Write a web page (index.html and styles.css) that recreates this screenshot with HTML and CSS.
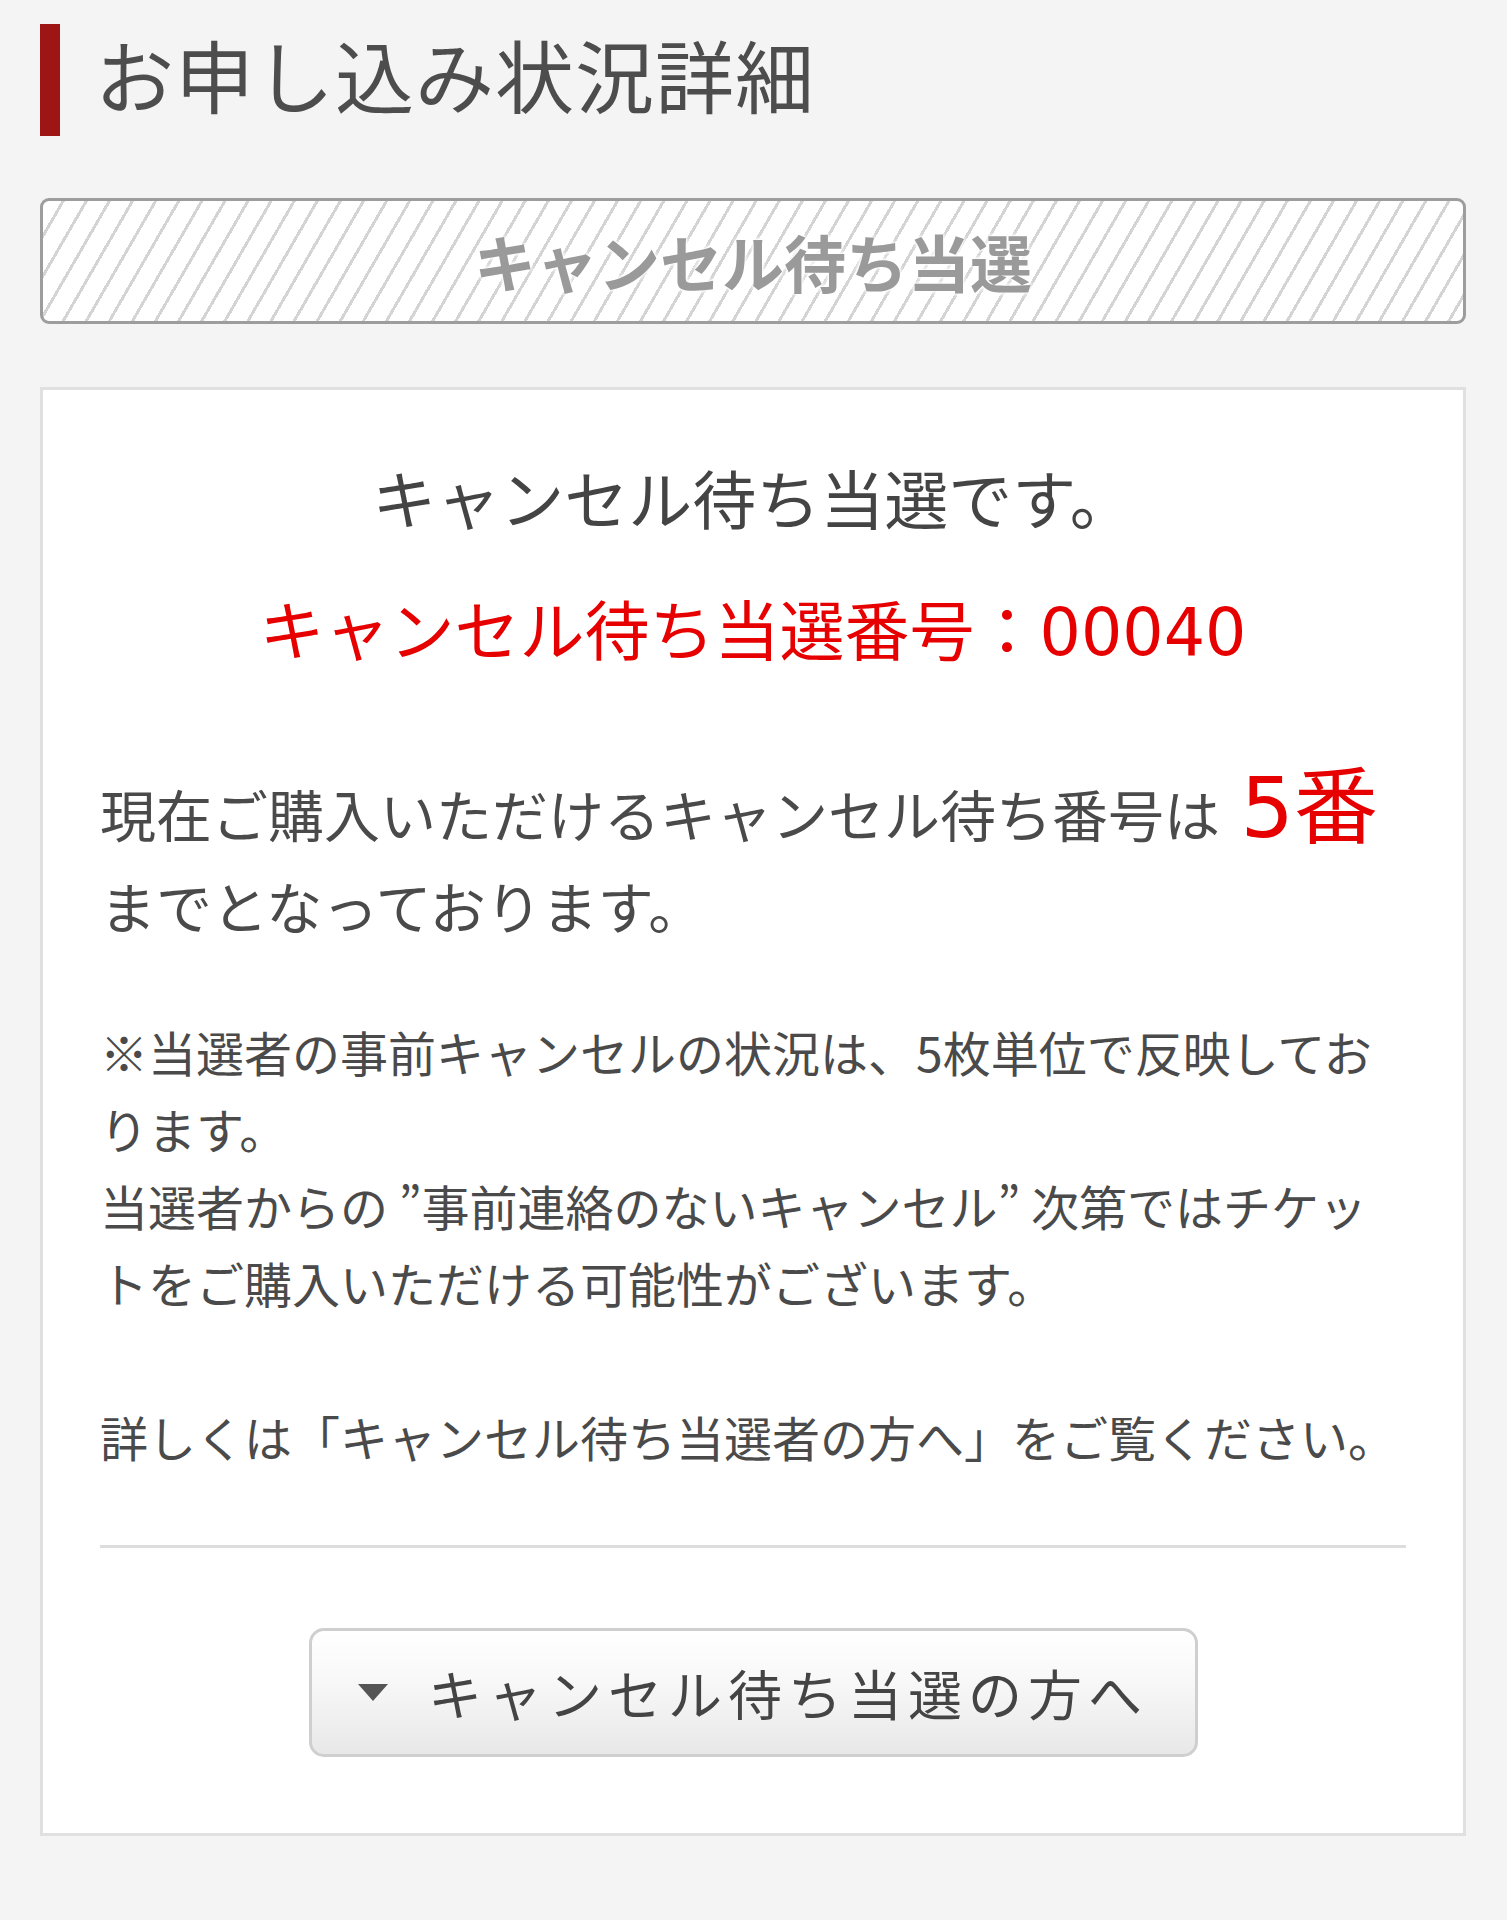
FILE: index.html
```html
<!DOCTYPE html>
<html lang="ja">
<head>
<meta charset="utf-8">
<title>お申し込み状況詳細</title>
<link rel="stylesheet" href="styles.css">
</head>
<body>
<div class="page">
  <h1 class="heading"><span class="heading-bar"></span><span class="heading-text">お申し込み状況詳細</span></h1>

  <div class="status-box"><span class="status-text">キャンセル待ち当選</span></div>

  <section class="card">
    <p class="card-title">キャンセル待ち当選です。</p>
    <p class="card-number">キャンセル待ち当選番号：<span class="digits">00040</span></p>
    <p class="lead">現在ご購入いただけるキャンセル待ち番号は <span class="lead-num"><span class="digits">5</span>番</span><br>までとなっております。</p>
    <p class="notes">※当選者の事前キャンセルの状況は、5枚単位で反映しております。<br>当選者からの ”事前連絡のないキャンセル” 次第ではチケットをご購入いただける可能性がございます。<br><br>詳しくは「キャンセル待ち当選者の方へ」をご覧ください。</p>
    <hr class="divider">
    <div class="btn-wrap">
      <button class="toggle-btn" type="button"><span class="tri"></span><span class="btn-label">キャンセル待ち当選の方へ</span></button>
    </div>
  </section>
</div>
</body>
</html>
```

FILE: styles.css
```css
html, body {
  margin: 0;
  padding: 0;
  background: #f4f4f4;
}
body {
  font-family: "Noto Sans CJK JP", "Noto Sans", sans-serif;
  color: #4a4a4a;
}
.page {
  padding: 24px 41px 0 40px;
}
.heading {
  display: flex;
  align-items: center;
  margin: 0;
  height: 112px;
  font-weight: 400;
}
.heading-bar {
  width: 20px;
  height: 112px;
  background: #9e1515;
  flex: none;
}
.heading-text {
  margin-left: 35px;
  margin-bottom: 12px;
  font-size: 79px;
  line-height: 100px;
  color: #4d4d4d;
  letter-spacing: 1px;
}
.status-box {
  margin-top: 62px;
  height: 120px;
  border: 3px solid #9d9d9d;
  border-radius: 9px;
  background: repeating-linear-gradient(120deg, #ffffff 0px, #ffffff 16px, #d4d4d4 16px, #d4d4d4 19px, #ffffff 19px, #ffffff 20px);
  display: flex;
  align-items: center;
  justify-content: center;
}
.status-text {
  font-size: 62px;
  line-height: 120px;
  font-weight: 700;
  color: #9a9a9a;
  text-shadow: 0 0 3px #fff, 0 0 3px #fff, 0 0 4px #fff, 0 0 6px #fff;
}
.card {
  margin-top: 63px;
  border: 3px solid #e0e0e0;
  background: #fff;
  padding: 46px 57px 76px 57px;
}
.card p {
  margin: 0;
}
.card-title {
  text-align: center;
  font-size: 64px;
  line-height: 120px;
  color: #444;
}
.card-number {
  margin-top: 21px !important;
  text-align: center;
  font-size: 65px;
  line-height: 100px;
  color: #e60000;
}
.digits {
  font-family: "DejaVu Sans", "Noto Sans", sans-serif;
}
.lead {
  margin-top: 76px !important;
  font-size: 56px;
  line-height: 92px;
  color: #4a4a4a;
}
.lead-num {
  font-size: 84px;
  line-height: 1;
  font-weight: 400;
  margin-left: 8px;
  color: #e60000;
}
.notes {
  margin-top: 62px !important;
  font-size: 48px;
  line-height: 77px;
  color: #4a4a4a;
}
.divider {
  margin: 70px 0 0 0;
  border: none;
  height: 3px;
  background: #dddddd;
}
.btn-wrap {
  margin-top: 80px;
  display: flex;
  justify-content: center;
}
.toggle-btn {
  width: 889px;
  height: 129px;
  border: 3px solid #cfcfcf;
  border-radius: 15px;
  background: linear-gradient(#ffffff 0%, #f8f8f8 40%, #e8e8e8 100%);
  display: flex;
  align-items: center;
  justify-content: center;
  padding: 0;
  font-family: "Noto Sans CJK JP", "Noto Sans", sans-serif;
  color: #444;
}
.tri {
  width: 0;
  height: 0;
  border-left: 15px solid transparent;
  border-right: 15px solid transparent;
  border-top: 17px solid #555;
  margin-right: 40px;
}
.btn-label {
  font-size: 54px;
  letter-spacing: 6px;
  line-height: 1;
}
```
